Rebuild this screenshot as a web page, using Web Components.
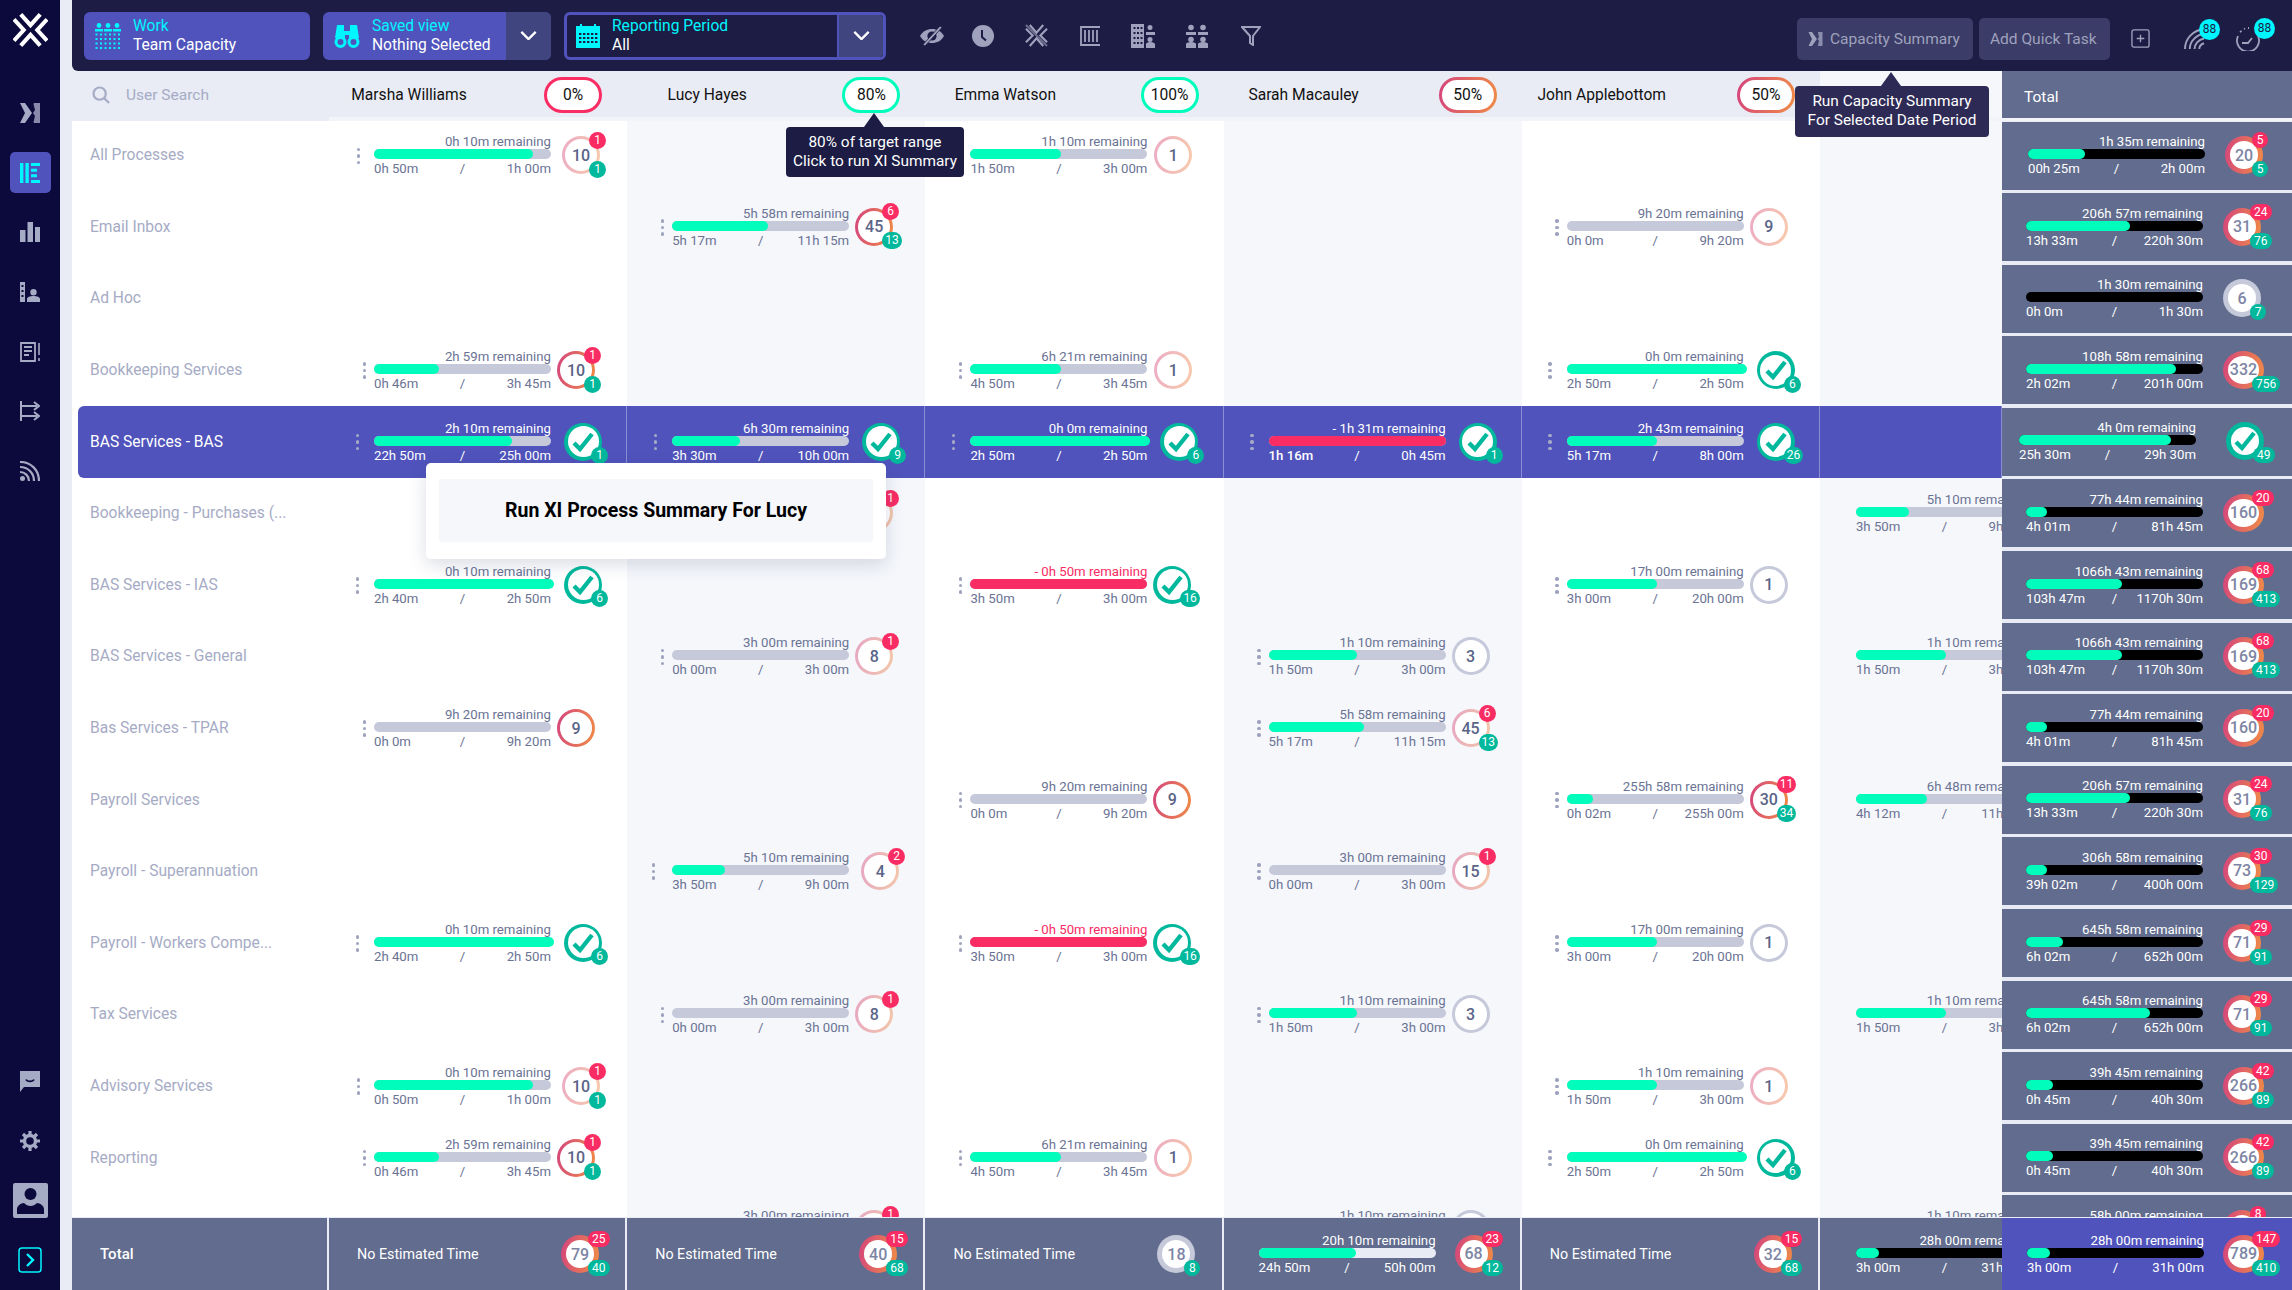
<!DOCTYPE html>
<html>
<head>
<meta charset="utf-8">
<title>Team Capacity</title>
<style>
    html, body { margin: 0; height: 100%; overflow: hidden; background: #e9ecf5; font-family: 'Roboto', 'Liberation Sans', sans-serif; }
</style>
</head>
<body>
<x-app></x-app>
<script>
// icons, all drawn on their own viewBox, coloured through currentColor
const ICONS = {
    logo: `<svg viewBox="0 0 36 34" fill="none" stroke="currentColor" stroke-width="4.200"><path d="M8 1l10 11L28 1M8 33l10-11 10 11M1 6l10 11L1 28M35 6L25 17l10 11"/></svg>`,
    xi: `<svg viewBox="0 0 20 20" fill="currentColor"><path d="M0 0h5l7 10-7 10H0l5-10z"/><path d="M14 0h6v20h-6l-.5-1 1.500-6-2-3 2-3-1.500-6z" opacity=".8"/></svg>`,
    weave: `<svg viewBox="0 0 24 24" fill="none" stroke="currentColor" stroke-width="2.200"><path d="M5 1l7 8 7-8M5 23l7-8 7 8M1 5l7 7-7 7M23 5l-7 7 7 7"/><path d="M1 1l22 22" opacity=".6"/></svg>`,
    lines: `<svg viewBox="0 0 20 20" fill="currentColor"><path d="M0 0h3.400v20H0zM5.400 0h3.400v20H5.400zM11 0h9v3h-9zM11 5.700h6v3h-6zM11 11.300h6v3h-6zM11 17h9v3h-9z"/></svg>`,
    bars: `<svg viewBox="0 0 20 20" fill="currentColor"><path d="M0 8h5.500v12H0zM7.500 0H13v20H7.500zM15 5h5v15h-5z"/></svg>`,
    person: `<svg viewBox="0 0 20 20" fill="currentColor"><path d="M0 0h5v20H0zM13.500 7a3.200 3.200 0 1 1 0 6.400 3.200 3.200 0 0 1 0-6.400zM7 20v-3c0-2 3-3 6.500-3S20 15 20 17v3z"/><path d="M1.500 3h2v2h-2zM1.500 8h2v2h-2zM1.500 13h2v2h-2z" fill="#0c093c"/></svg>`,
    doc: `<svg viewBox="0 0 20 20" fill="none" stroke="currentColor" stroke-width="1.800"><path d="M1 1h14v18H1zM4 5h8M4 9h8M4 13h5"/><path d="M19 1v12M19 16v3" stroke-width="1.600"/></svg>`,
    arrows: `<svg viewBox="0 0 20 20" fill="none" stroke="currentColor" stroke-width="2"><path d="M1 0v20M1 5h16M1 15h16M14 1l5 4-5 4M14 11l5 4-5 4"/></svg>`,
    rss: `<svg viewBox="0 0 20 20" fill="none" stroke="currentColor" stroke-width="2.200"><path d="M0 1c11 0 19 8 19 19M0 6c8 0 14 6 14 14M0 11c5 0 9 4 9 9"/><circle cx="2.500" cy="17.500" r="2.500" fill="currentColor" stroke="none"/></svg>`,
    wifi: `<svg viewBox="0 0 22 22" fill="none" stroke="currentColor" stroke-width="2"><path d="M1 22C1 11 10 2 21 1M6 22C6 14 13 7 21 6M11 22c0-5 4-10 10-11M16 22c0-3 2-5 5-6"/></svg>`,
    msg: `<svg viewBox="0 0 20 21" fill="currentColor"><path d="M0 0h20v16H4l-4 5z"/><path d="M6 8.500c1 2.500 7 2.500 8 0" fill="none" stroke="#0c093c" stroke-width="1.600"/></svg>`,
    gear: `<svg viewBox="0 0 20 20" fill="none" stroke="currentColor"><circle cx="10" cy="10" r="5.500" stroke-width="3.400"/><path d="M10 0v4M10 16v4M0 10h4M16 10h4M3 3l3 3M14 14l3 3M17 3l-3 3M6 14l-3 3" stroke-width="3.200"/></svg>`,
    avatar: `<svg viewBox="0 0 35 35"><rect fill="currentColor" width="35" height="35" rx="2"/><circle cx="17.500" cy="11" r="6" fill="#0c093c"/><path fill="#0c093c" d="M4 31v-5c0-3 4-6 7-6 2 2 4 3 6.500 3s4.500-1 6.500-3c3 0 7 3 7 6v5z"/></svg>`,
    people: `<svg viewBox="0 0 26 26" fill="currentColor"><circle cx="4" cy="2.500" r="2.400"/><circle cx="13" cy="2.500" r="2.400"/><circle cx="22" cy="2.500" r="2.400"/><path d="M0 6h8v2.400H0zM9 6h8v2.400H9zM18 6h8v2.400h-8z"/><path d="M.5 10.500h2v2h-2zM5 10.500h2v2H5zM9.500 10.500h2v2h-2zM14 10.500h2v2h-2zM18.500 10.500h2v2h-2zM23 10.500h2v2h-2zM.5 15h2v2h-2zM5 15h2v2H5zM9.500 15h2v2h-2zM14 15h2v2h-2zM18.500 15h2v2h-2zM23 15h2v2h-2zM.5 19.500h2v2h-2zM5 19.500h2v2H5zM9.500 19.500h2v2h-2zM14 19.500h2v2h-2zM18.500 19.500h2v2h-2zM23 19.500h2v2h-2zM.5 24h2v2h-2zM5 24h2v2H5zM9.500 24h2v2h-2zM14 24h2v2h-2zM18.500 24h2v2h-2zM23 24h2v2h-2z"/></svg>`,
    binoculars: `<svg viewBox="0 0 26 26" fill="currentColor"><path d="M3 2h7v6h6V2h7l2 13H15v-3h-4v3H1z"/><circle cx="6.500" cy="19" r="4.500" fill="none" stroke="currentColor" stroke-width="3"/><circle cx="19.500" cy="19" r="4.500" fill="none" stroke="currentColor" stroke-width="3"/></svg>`,
    calendar: `<svg viewBox="0 0 24 24"><path fill="currentColor" d="M0 2h4V0h2v2h12V0h2v2h4v22H0z"/><path fill="#1c1c44" d="M3 9h2.400v2H3zM7 9h2.400v2H7zM11 9h2.400v2H11zM15 9h2.400v2H15zM19 9h2.400v2H19zM3 13h2.400v2H3zM7 13h2.400v2H7zM11 13h2.400v2H11zM15 13h2.400v2H15zM19 13h2.400v2H19zM3 17h2.400v2H3zM7 17h2.400v2H7zM11 17h2.400v2H11zM15 17h2.400v2H15zM19 17h2.400v2H19z"/></svg>`,
    chevron: `<svg viewBox="0 0 18 10" fill="none" stroke="currentColor" stroke-width="2.600"><path d="M1 1l8 8 8-8"/></svg>`,
    search: `<svg viewBox="0 0 20 20" fill="none" stroke="currentColor" stroke-width="2.400"><circle cx="8.500" cy="8.500" r="6.800"/><path d="M13.500 13.500L19 19"/></svg>`,
    eyeoff: `<svg viewBox="0 0 24 20" fill="currentColor"><path d="M0 10c3-5 7-7 12-7s9 2 12 7c-3 5-7 7-12 7S3 15 0 10z"/><circle cx="12" cy="10" r="4.600" fill="#1c1c44"/><path d="M20 0l2 1.500L5 20l-2-1.500z" stroke="#1c1c44" stroke-width=".8"/></svg>`,
    clock: `<svg viewBox="0 0 22 22"><circle cx="11" cy="11" r="11" fill="currentColor"/><path d="M10 5v7l4 3.500" fill="none" stroke="#1c1c44" stroke-width="2"/></svg>`,
    columns: `<svg viewBox="0 0 20 20" fill="none" stroke="currentColor" stroke-width="1.800"><path d="M20 19H1V1h19M5 4v12M9 4v12M13 4v12M17 4v12"/></svg>`,
    building: `<svg viewBox="0 0 24 24"><path fill="currentColor" d="M0 0h13v24H0z"/><path fill="#1c1c44" d="M2.500 3h2v2h-2zM6 3h2v2H6zM9.500 3h2v2h-2zM2.500 8h2v2h-2zM6 8h2v2H6zM9.500 8h2v2h-2zM2.500 13h2v2h-2zM6 13h2v2H6zM9.500 13h2v2h-2zM2.500 18h2v2h-2zM6 18h2v2H6zM9.500 18h2v2h-2z"/><g fill="currentColor"><circle cx="19" cy="3.500" r="2.500"/><path d="M15 8h9v3h-9z"/><circle cx="19" cy="15.500" r="2.500"/><path d="M15 20c0-1 2-2 4-2s5 1 5 2v4h-9z"/></g></svg>`,
    team: `<svg viewBox="0 0 24 24" fill="currentColor"><circle cx="6" cy="3.500" r="2.800"/><circle cx="18" cy="3.500" r="2.800"/><path d="M1 8h10v3H1zM13 8h10v3H13z"/><circle cx="6" cy="15.500" r="2.800"/><circle cx="18" cy="15.500" r="2.800"/><path d="M1 20c0-1 2-2 5-2s5 1 5 2v4H1zM13 20c0-1 2-2 5-2s5 1 5 2v4H13z"/></svg>`,
    funnel: `<svg viewBox="0 0 20 20" fill="none" stroke="currentColor" stroke-width="2"><path d="M1 1h18l-7 9v9l-3-2v-7z"/></svg>`,
    plus: `<svg viewBox="0 0 20 20" fill="none" stroke="currentColor" stroke-width="1.400"><rect x="1" y="1" width="18" height="18" rx="2"/><path d="M10 6v8M6 10h8"/></svg>`,
    dial: `<svg viewBox="0 0 24 24" fill="none" stroke="currentColor" stroke-width="1.800"><path d="M22 9a11 11 0 1 1-20 0" /><path d="M4 5l1.500-1M8 2l1-.5M12 1h1" /><path d="M6 16h6l4-5"/></svg>`,
    next: `<svg viewBox="0 0 24 26" fill="none" stroke="currentColor"><rect x="1" y="1" width="22" height="24" rx="3" stroke-width="1.500"/><path d="M9 7l6 6-6 6" stroke-width="2.400"/></svg>`
};

class XIcon extends HTMLElement {
    connectedCallback() {
        const w = this.getAttribute("w") || 20;
        const h = this.getAttribute("h") || w;
        this.attachShadow({ mode: "open" }).innerHTML = `
            <style>
                :host { display: block; width: ${w}px; height: ${h}px; flex: none; color: ${this.getAttribute("color") || "inherit"}; }
                svg { display: block; width: 100%; height: 100%; }
            </style>
            ${ICONS[this.getAttribute("name")]}`;
    }
}
customElements.define("x-icon", XIcon);

class XSideItem extends HTMLElement {
    connectedCallback() {
        this.attachShadow({ mode: "open" }).innerHTML = `
            <style>
                :host { display: flex; height: 59.700px; align-items: center; justify-content: center; color: #a6abc5; }
                #box { width: 41px; height: 41px; border-radius: 5px; display: flex; align-items: center; justify-content: center; }
                :host([active]) { color: #00f6ff; }
                :host([active]) #box { background: #4f53bb; }
            </style>
            <div id="box"><slot></slot></div>`;
    }
}
customElements.define("x-side-item", XSideItem);

class XSidebar extends HTMLElement {
    connectedCallback() {
        this.attachShadow({ mode: "open" }).innerHTML = `
            <style>
                :host { display: flex; flex-direction: column; width: 60px; height: 1290px; background: #0c093c; }
                #logo { padding: 13px 0 36px 13px; color: #fff; }
                #spacer { flex: 1; }
            </style>
            <div id="logo"><x-icon name="logo" w="35" h="34"></x-icon></div>
            <x-side-item><x-icon name="xi" w="20"></x-icon></x-side-item>
            <x-side-item active><x-icon name="lines" w="20"></x-icon></x-side-item>
            <x-side-item><x-icon name="bars" w="20"></x-icon></x-side-item>
            <x-side-item><x-icon name="person" w="20"></x-icon></x-side-item>
            <x-side-item><x-icon name="doc" w="20"></x-icon></x-side-item>
            <x-side-item><x-icon name="arrows" w="20"></x-icon></x-side-item>
            <x-side-item><x-icon name="rss" w="20"></x-icon></x-side-item>
            <div id="spacer"></div>
            <x-side-item><x-icon name="msg" w="20" h="21"></x-icon></x-side-item>
            <x-side-item><x-icon name="gear" w="20"></x-icon></x-side-item>
            <x-side-item><x-icon name="avatar" w="35"></x-icon></x-side-item>
            <x-side-item><x-icon name="next" w="24" h="26" color="#00f6ff"></x-icon></x-side-item>`;
    }
}
customElements.define("x-sidebar", XSidebar);

// the three selector buttons at the left of the top bar
class XPicker extends HTMLElement {
    connectedCallback() {
        const drop = this.hasAttribute("drop");
        this.attachShadow({ mode: "open" }).innerHTML = `
            <style>
                :host { display: flex; height: 48px; box-sizing: border-box; border-radius: 6px; background: #4f53bb; overflow: hidden; flex: none; }
                :host([outline]) { border: 3px solid #4f53bb; background: #1c1c44; }
                #main { flex: 1; display: flex; align-items: center; gap: 12px; padding-left: 11px; }
                :host([outline]) #main { padding-left: 9px; }
                #text { display: flex; flex-direction: column; font-size: 15.600px; line-height: 19px; color: #fff; white-space: nowrap; }
                #label { color: #00f6ff; }
                #drop { display: ${drop ? "flex" : "none"}; width: 45px; align-items: center; justify-content: center; background: #40447f; color: #fff; }
                :host([outline]) #drop { border-left: 2px solid #4f53bb; width: 44px; }
            </style>
            <div id="main">
                <slot></slot>
                <div id="text">
                    <span id="label">${this.getAttribute("label")}</span>
                    <span>${this.getAttribute("value")}</span>
                </div>
            </div>
            <div id="drop"><x-icon name="chevron" w="17" h="9"></x-icon></div>`;
    }
}
customElements.define("x-picker", XPicker);

class XToolButton extends HTMLElement {
    constructor() {
        super();
        this.attachShadow({ mode: "open" }).innerHTML = `
            <style>
                :host { display: flex; align-items: center; gap: 7px; height: 42px; box-sizing: border-box; padding: 0 11px; border-radius: 5px; background: #3c3c68; color: #9ea2bd; font-size: 15.500px; white-space: nowrap; }
            </style>
            <slot></slot>`;
    }
}
customElements.define("x-tool-button", XToolButton);

class XNotify extends HTMLElement {
    connectedCallback() {
        this.attachShadow({ mode: "open" }).innerHTML = `
            <style>
                :host { display: block; position: relative; color: #9ea2bd; }
                #badge { position: absolute; right: -15px; top: -9px; width: 21px; height: 21px; border-radius: 50%; background: #00f6ff; color: #1c1c44; font-size: 12px; line-height: 21px; text-align: center; }
            </style>
            <slot></slot>
            <div id="badge">88</div>`;
    }
}
customElements.define("x-notify", XNotify);

class XTopbar extends HTMLElement {
    connectedCallback() {
        this.attachShadow({ mode: "open" }).innerHTML = `
            <style>
                :host { display: flex; align-items: center; height: 71px; box-sizing: border-box; padding: 0 32px 0 12px; background: #1c1c44; border-bottom-left-radius: 6px; flex: none; }
                #pickers { display: flex; gap: 13px; }
                #tools { display: flex; align-items: center; margin-left: 34px; color: #9ea2bd; }
                #right { margin-left: auto; display: flex; align-items: center; }
                #right > * { flex: none; }
            </style>
            <div id="pickers">
                <x-picker style="width:226px" label="Work" value="Team Capacity"><x-icon name="people" w="26" color="#00f6ff"></x-icon></x-picker>
                <x-picker style="width:228px" label="Saved view" value="Nothing Selected" drop><x-icon name="binoculars" w="26" color="#00f6ff"></x-icon></x-picker>
                <x-picker style="width:322px" label="Reporting Period" value="All" drop outline><x-icon name="calendar" w="24" color="#00f6ff"></x-icon></x-picker>
            </div>
            <div id="tools">
                <x-icon name="eyeoff" w="24" h="20"></x-icon>
                <x-icon name="clock" w="22" style="margin-left:28px"></x-icon>
                <x-icon name="weave" w="23" style="margin-left:31px"></x-icon>
                <x-icon name="columns" w="20" style="margin-left:32px"></x-icon>
                <x-icon name="building" w="24" style="margin-left:31px"></x-icon>
                <x-icon name="team" w="24" style="margin-left:30px"></x-icon>
                <x-icon name="funnel" w="20" style="margin-left:32px"></x-icon>
            </div>
            <div id="right">
                <x-tool-button style="width:176px; margin-top:6px"><x-icon name="xi" w="15" h="14"></x-icon>Capacity Summary</x-tool-button>
                <x-tool-button style="margin-left:6px; width:131px; margin-top:6px">Add Quick Task</x-tool-button>
                <x-icon name="plus" w="19" color="#9ea2bd" style="margin-left:21px; margin-top:6px"></x-icon>
                <x-notify style="margin-left:34px; margin-top:6px"><x-icon name="wifi" w="21"></x-icon></x-notify>
                <x-notify style="margin-left:31px; margin-top:6px"><x-icon name="dial" w="24"></x-icon></x-notify>
            </div>`;
    }
}
customElements.define("x-topbar", XTopbar);

// shared column template for header, rows and footer
const GRID_STYLE = "display: grid; grid-template-columns: 257px repeat(5, 298.2px) 1fr 290px;";

class XPill extends HTMLElement {
    connectedCallback() {
        const tone = this.getAttribute("tone");
        const edge = { red: "#f92c64", green: "#00fdbb", mix: "linear-gradient(100deg,#d4447d,#f08d45)" }[tone];
        this.attachShadow({ mode: "open" }).innerHTML = `
            <style>
                :host { display: block; width: 58px; height: 36px; box-sizing: border-box; padding: 3px; border-radius: 18px; background: ${edge}; flex: none; }
                div { height: 100%; border-radius: 15px; background: #fff; color: #111; font-size: 15.600px; display: flex; align-items: center; justify-content: center; }
            </style>
            <div><slot></slot></div>`;
    }
}
customElements.define("x-pill", XPill);

class XHeadCell extends HTMLElement {
    connectedCallback() {
        this.attachShadow({ mode: "open" }).innerHTML = `
            <style>
                :host { display: flex; align-items: center; justify-content: space-between; height: 46px; box-sizing: border-box; padding: 2px 25px 0 0; background: #e9ecf5; color: #111; font-size: 15.600px; }
                #name { width: 160px; text-align: center; white-space: nowrap; }
            </style>
            <div id="name">${this.getAttribute("name")}</div>
            <x-pill tone="${this.getAttribute("tone")}">${this.getAttribute("pct")}</x-pill>`;
    }
}
customElements.define("x-head-cell", XHeadCell);

class XHead extends HTMLElement {
    connectedCallback() {
        this.attachShadow({ mode: "open" }).innerHTML = `
            <style>
                :host { ${GRID_STYLE} height: 50px; position: relative; z-index: 1; flex: none; background: #f2f4fa; }
                #search { display: flex; align-items: center; gap: 16px; padding: 0 0 2px 20px; background: #e9ecf5; color: #a6abc5; font-size: 15.500px; }
                #empty { background: #f5f7fb; height: 46px; }
                #total { height: 47px; box-sizing: border-box; padding: 5px 0 0 22px; background: #616c8e; color: #fff; font-size: 15.500px; display: flex; align-items: center; }
            </style>
            <div id="search"><x-icon name="search" w="18"></x-icon>User Search</div>
            <x-head-cell name="Marsha Williams" pct="0%" tone="red"></x-head-cell>
            <x-head-cell name="Lucy Hayes" pct="80%" tone="green"></x-head-cell>
            <x-head-cell name="Emma Watson" pct="100%" tone="green"></x-head-cell>
            <x-head-cell name="Sarah Macauley" pct="50%" tone="mix"></x-head-cell>
            <x-head-cell name="John Applebottom" pct="50%" tone="mix"></x-head-cell>
            <div id="empty"></div>
            <div id="total">Total</div>`;
    }
}
customElements.define("x-head", XHead);

// ring with a count or a tick, and the two little badges on its edge
class XRing extends HTMLElement {
    connectedCallback() {
        const value = this.getAttribute("value");
        const tone = this.getAttribute("tone") || "bright";
        const heavy = this.hasAttribute("heavy");
        const check = value === "check";
        const edge = {
            bright: "linear-gradient(100deg,#d4447d,#f08d45)",
            pale: "linear-gradient(100deg,rgba(212,68,125,.45),rgba(240,141,69,.45))",
            gray: "#c5c9da",
            check: "#00b89c"
        }[check ? "check" : tone];
        const red = this.getAttribute("red");
        const teal = this.getAttribute("teal");
        const wide = value.length > 2 && !check;
        this.attachShadow({ mode: "open" }).innerHTML = `
            <style>
                :host { display: block; position: relative; flex: none; width: ${wide ? 41 : 38}px; height: 38px; font-family: 'Roboto', sans-serif; }
                #edge { box-sizing: border-box; width: 100%; height: 100%; padding: ${heavy ? 5 : (check ? 3.5 : 3)}px; border-radius: 50%; background: ${edge}; }
                #in { width: 100%; height: 100%; border-radius: 50%; background: #fff; display: flex; align-items: center; justify-content: center;
                      font-size: 16px; font-weight: 500; color: ${heavy ? "#7d85a5" : "#5a6488"}; }
                .badge { position: absolute; left: ${wide ? 29 : 27}px; height: ${heavy ? 16 : 17}px; min-width: ${heavy ? 16 : 17}px; box-sizing: border-box; padding: 0 ${heavy ? 4 : 3}px; border-radius: 9px; font-size: 12px; line-height: ${heavy ? 16 : 17}px; text-align: center; color: #fff; }
                #red { top: ${heavy ? -4 : -4.5}px; background: #f92c64; }
                #teal { top: ${heavy ? 25 : 24.5}px; background: #00b89c; }
                svg { width: 24px; height: 22px; display: block; }
            </style>
            <div id="edge"><div id="in">${check ? `<svg viewBox="0 0 24 22" fill="none" stroke="#00b89c" stroke-width="4.400"><path d="M3 12l6 6L21 3"/></svg>` : value}</div></div>
            ${red ? `<div class="badge" id="red">${red}</div>` : ""}
            ${teal ? `<div class="badge" id="teal">${teal}</div>` : ""}`;
    }
}
customElements.define("x-ring", XRing);

// bar with "remaining" above and done / estimate below
class XBar extends HTMLElement {
    connectedCallback() {
        const fill = +this.getAttribute("fill");
        const over = this.hasAttribute("over");
        const rem = this.getAttribute("rem");
        this.attachShadow({ mode: "open" }).innerHTML = `
            <style>
                :host { display: block; width: 177px; flex: none; font-size: 13.200px; line-height: 14px; color: var(--bar-text, #6a7394); white-space: nowrap; font-family: 'Roboto', sans-serif; }
                #rem { text-align: right; }
                :host([over]) #rem { color: var(--bar-over, #f92c64); }
                #track { position: relative; height: 10px; border-radius: 5px; background: var(--bar-track, #c5c9da); margin-bottom: 3px; }
                #fill { height: 100%; border-radius: 5px; background: ${over ? "#f92c64" : "#00fdbb"}; width: ${fill > 100 ? "calc(100% + 3px)" : fill + "%"}; }
                #nums { display: grid; grid-template-columns: 1fr auto 1fr; }
                #nums span:last-child { text-align: right; }
                :host([strong]) #nums span:first-child { font-weight: 500; }
            </style>
            <div id="rem">${rem} remaining</div>
            <div id="track"><div id="fill"></div></div>
            <div id="nums"><span>${this.getAttribute("done")}</span><span>/</span><span>${this.getAttribute("est")}</span></div>`;
    }
}
customElements.define("x-bar", XBar);

class XDots extends HTMLElement {
    constructor() {
        super();
        this.attachShadow({ mode: "open" }).innerHTML = `
            <style>
                :host { display: flex; flex-direction: column; gap: 3px; flex: none; }
                i { width: 3.500px; height: 3.500px; border-radius: 50%; background: var(--dots, #9ea2bd); }
            </style>
            <i></i><i></i><i></i>`;
    }
}
customElements.define("x-dots", XDots);

// one process / person cell. spec: {rem, done, est, fill, ring, tone, red, teal, pad, gap, dot, over, strong}
class XCell extends HTMLElement {
    set spec(s) { this._spec = s; }
    connectedCallback() {
        const s = this._spec || {};
        const check = s.ring === "check";
        const kind = this.getAttribute("kind") || "";
        const heavy = kind !== "";
        const gap = s.gap != null ? s.gap : (check ? 13 : (heavy ? 20 : 6));
        const dot = s.dot != null ? s.dot : (check ? 15 : 8);
        const pad = s.pad != null ? s.pad : 45;
        const attrs = (s.red ? ` red="${s.red}"` : "") + (s.teal ? ` teal="${s.teal}"` : "") + (s.tone ? ` tone="${s.tone}"` : "") + (heavy ? " heavy" : "");
        const ring = s.ring ? `<x-ring value="${s.ring}"${attrs}></x-ring>` : "";
        let body = "";
        if (s.noest) {
            body = `<div id="noest">No Estimated Time</div>${ring}`;
        } else if (s.rem) {
            // the clipped sixth column carries no drag dots
            const lead = heavy ? "" : `<div id="dots" style="width:${pad}px;padding-right:${dot}px">${s.pad ? "" : "<x-dots></x-dots>"}</div>`;
            body = `${lead}
                <x-bar rem="${s.rem}" done="${s.done}" est="${s.est}" fill="${s.fill}"${s.over ? " over" : ""}${s.strong ? " strong" : ""}></x-bar>
                <div id="ring" style="margin-left:${gap}px">${ring}</div>`;
        }
        this.attachShadow({ mode: "open" }).innerHTML = `
            <style>
                :host { display: flex; align-items: center; min-width: 0; overflow: hidden; box-sizing: border-box; background: var(--cell-bg, #fff); }
                :host([alt]) { background: #f5f7fb; }
                :host([kind="total"]) { margin: 1.500px 0 2px; height: 68px; padding-left: ${s.pad != null ? s.pad : 24}px; background: #616c8e; --bar-text: #fff; --bar-track: #000; --bar-over: #fff; overflow: visible; }
                :host([kind="foot"]) { padding-left: ${s.pad != null ? s.pad : 0}px; background: #616c8e; --bar-text: #fff; --bar-track: #000; border-left: 2px solid #e9ecf5; margin-left: -2px; }
                :host([kind="grand"]) { padding-left: 25px; background: #4f53bb; --bar-text: #fff; --bar-track: #000; overflow: visible; }
                :host([sel]) { background: #4f53bb; --bar-text: #fff; --bar-over: #fff; --dots: #a6abc5; border-right: 1px solid #8a8ed0; }
                #dots { display: flex; justify-content: flex-end; box-sizing: border-box; flex: none; }
                #ring { padding-bottom: 1px; flex: none; }
                #noest { width: 204px; padding-left: 28px; color: #fff; font-size: 14.300px; white-space: nowrap; flex: none; }
            </style>
            ${body}`;
    }
}
customElements.define("x-cell", XCell);

class XRow extends HTMLElement {
    connectedCallback() {
        const label = this.getAttribute("label");
        this.attachShadow({ mode: "open" }).innerHTML = `
            <style>
                :host { ${GRID_STYLE} height: 71.600px; flex: none; }
                #label { background: #fff; min-width: 0; }
                #inner { height: 100%; margin-left: 5.500px; padding: 0 0 1px 12.500px; box-sizing: border-box; display: flex; align-items: center; color: #a6abc5; font-size: 15.600px; white-space: nowrap; }
                :host([sel]) #inner { background: #4f53bb; color: #fff; border-radius: 6px 0 0 6px; }
            </style>
            <div id="label"><div id="inner">${label}</div></div>
            <slot></slot>`;
    }
}
customElements.define("x-row", XRow);

class XFoot extends HTMLElement {
    constructor() {
        super();
        this.attachShadow({ mode: "open" }).innerHTML = `
            <style>
                :host { ${GRID_STYLE} height: 73px; flex: none; position: relative; z-index: 1; background: #616c8e; border-top: 1px solid #e9ecf5; box-sizing: border-box; }
                #total { color: #fff; font-size: 15px; font-weight: 500; display: flex; align-items: center; padding-left: 28px; background: #616c8e; }
            </style>
            <div id="total">Total</div>
            <slot></slot>`;
    }
}
customElements.define("x-foot", XFoot);

// dark tooltip with an arrow on top
class XTip extends HTMLElement {
    connectedCallback() {
        const bg = this.getAttribute("bg");
        this.attachShadow({ mode: "open" }).innerHTML = `
            <style>
                :host { display: block; position: absolute; z-index: 5; box-sizing: border-box; background: ${bg}; border-radius: 4px; color: #fff; font-size: 15.400px; line-height: 19px; text-align: center; white-space: nowrap; padding-top: 6px; }
                #arrow { position: absolute; left: ${this.getAttribute("arrow")}px; top: -14px; margin-left: -10px; border: 10px solid transparent; border-top: 0; border-bottom: 14px solid ${bg}; }
            </style>
            <div id="arrow"></div>
            <slot></slot>`;
    }
}
customElements.define("x-tip", XTip);

class XPopup extends HTMLElement {
    constructor() {
        super();
        this.attachShadow({ mode: "open" }).innerHTML = `
            <style>
                :host { display: block; position: absolute; z-index: 5; left: 426px; top: 463px; width: 460px; height: 96px; box-sizing: border-box; padding: 16px 13px 17px; background: #fff; border-radius: 5px; box-shadow: 0 6px 18px rgba(60, 70, 110, .18); }
                div { height: 100%; border-radius: 3px; background: #f5f7fb; display: flex; align-items: center; justify-content: center; color: #000; font-size: 19.500px; font-weight: 700; box-sizing: border-box; }
            </style>
            <div><slot></slot></div>`;
    }
}
customElements.define("x-popup", XPopup);

// table data: col -> [rem, done, est, fill, ring, tone, red, teal, extras]
const fade10 = (rem, done, est, fill) => [rem, done, est, fill, "10", "pale", 1, 1, { gap: 11, dot: 14 }];
const tick = (rem, done, est, fill, teal, extra) => [rem, done, est, fill, "check", "", "", teal, extra];
const ROWS = [
    { label: "All Processes", cells: { 0: fade10("0h 10m", "0h 50m", "1h 00m", 90), 2: ["1h 10m", "1h 50m", "3h 00m", 51, "1", "pale", "", "", { gap: 7 }] },
      total: ["1h 35m", "00h 25m", "2h 00m", 32, "20", "bright", 5, 5, { pad: 26 }] },
    { label: "Email Inbox", cells: { 1: ["5h 58m", "5h 17m", "11h 15m", 54, "45", "bright", 6, 13], 4: ["9h 20m", "0h 0m", "9h 20m", 0, "9", "pale", "", ""] },
      total: ["206h 57m", "13h 33m", "220h 30m", 59, "31", "bright", 24, 76] },
    { label: "Ad Hoc", cells: {},
      total: ["1h 30m", "0h 0m", "1h 30m", 0, "6", "gray", "", 7] },
    { label: "Bookkeeping Services", cells: { 0: ["2h 59m", "0h 46m", "3h 45m", 37, "10", "bright", 1, 1], 2: ["6h 21m", "4h 50m", "3h 45m", 51, "1", "pale", "", "", { gap: 7 }], 4: tick("0h 0m", "2h 50m", "2h 50m", 101, 6) },
      total: ["108h 58m", "2h 02m", "201h 00m", 85, "332", "bright", "", 756] },
    { label: "BAS Services - BAS", sel: true, cells: { 0: tick("2h 10m", "22h 50m", "25h 00m", 78, 1), 1: tick("6h 30m", "3h 30m", "10h 00m", 38.500, 9), 2: tick("0h 0m", "2h 50m", "2h 50m", 101, 6), 3: ["- 1h 31m", "1h 16m", "0h 45m", 100, "check", "", "", 1, { over: 1, strong: 1 }], 4: tick("2h 43m", "5h 17m", "8h 00m", 51, 26) },
      total: ["4h 0m", "25h 30m", "29h 30m", 86, "check", "", "", 49, { pad: 17, gap: 30 }] },
    { label: "Bookkeeping - Purchases (...", cells: { 1: ["6h 30m", "3h 30m", "10h 00m", 38, "1", "pale", 1, ""], 5: ["5h 10m", "3h 50m", "9h 00m", 30, "", "", "", "", { pad: 36 }] },
      total: ["77h 44m", "4h 01m", "81h 45m", 12, "160", "bright", 20, ""] },
    { label: "BAS Services - IAS", cells: { 0: tick("0h 10m", "2h 40m", "2h 50m", 101, 6), 2: ["- 0h 50m", "3h 50m", "3h 00m", 100, "check", "", "", 16, { over: 1, gap: 6, dot: 8 }], 4: ["17h 00m", "3h 00m", "20h 00m", 51, "1", "gray", "", ""] },
      total: ["1066h 43m", "103h 47m", "1170h 30m", 54, "169", "bright", 68, 413] },
    { label: "BAS Services - General", cells: { 1: ["3h 00m", "0h 00m", "3h 00m", 0, "8", "pale", 1, ""], 3: ["1h 10m", "1h 50m", "3h 00m", 50, "3", "gray", "", ""], 5: ["1h 10m", "1h 50m", "3h 00m", 51, "", "", "", "", { pad: 36 }] },
      total: ["1066h 43m", "103h 47m", "1170h 30m", 54, "169", "bright", 68, 413] },
    { label: "Bas Services - TPAR", cells: { 0: ["9h 20m", "0h 0m", "9h 20m", 0, "9", "bright", "", ""], 3: ["5h 58m", "5h 17m", "11h 15m", 54, "45", "pale", 6, 13] },
      total: ["77h 44m", "4h 01m", "81h 45m", 12, "160", "bright", 20, ""] },
    { label: "Payroll Services", cells: { 2: ["9h 20m", "0h 0m", "9h 20m", 0, "9", "bright", "", ""], 4: ["255h 58m", "0h 02m", "255h 00m", 15, "30", "bright", 11, 34], 5: ["6h 48m", "4h 12m", "11h 00m", 40, "", "", "", "", { pad: 36 }] },
      total: ["206h 57m", "13h 33m", "220h 30m", 59, "31", "bright", 24, 76] },
    { label: "Payroll - Superannuation", cells: { 1: ["5h 10m", "3h 50m", "9h 00m", 30, "4", "pale", 2, "", { gap: 12, dot: 17 }], 3: ["3h 00m", "0h 00m", "3h 00m", 0, "15", "pale", 1, ""] },
      total: ["306h 58m", "39h 02m", "400h 00m", 12, "73", "bright", 30, 129] },
    { label: "Payroll - Workers Compe...", cells: { 0: tick("0h 10m", "2h 40m", "2h 50m", 101, 6), 2: ["- 0h 50m", "3h 50m", "3h 00m", 100, "check", "", "", 16, { over: 1, gap: 6, dot: 8 }], 4: ["17h 00m", "3h 00m", "20h 00m", 51, "1", "gray", "", ""] },
      total: ["645h 58m", "6h 02m", "652h 00m", 21, "71", "bright", 29, 91] },
    { label: "Tax Services", cells: { 1: ["3h 00m", "0h 00m", "3h 00m", 0, "8", "pale", 1, ""], 3: ["1h 10m", "1h 50m", "3h 00m", 50, "3", "gray", "", ""], 5: ["1h 10m", "1h 50m", "3h 00m", 51, "", "", "", "", { pad: 36 }] },
      total: ["645h 58m", "6h 02m", "652h 00m", 70, "71", "bright", 29, 91] },
    { label: "Advisory Services", cells: { 0: fade10("0h 10m", "0h 50m", "1h 00m", 90), 4: ["1h 10m", "1h 50m", "3h 00m", 51, "1", "pale", "", ""] },
      total: ["39h 45m", "0h 45m", "40h 30m", 15, "266", "bright", 42, 89] },
    { label: "Reporting", cells: { 0: ["2h 59m", "0h 46m", "3h 45m", 37, "10", "bright", 1, 1], 2: ["6h 21m", "4h 50m", "3h 45m", 51, "1", "pale", "", "", { gap: 7 }], 4: tick("0h 0m", "2h 50m", "2h 50m", 101, 6) },
      total: ["39h 45m", "0h 45m", "40h 30m", 15, "266", "bright", 42, 89] },
    { label: "", cells: { 1: ["3h 00m", "0h 00m", "3h 00m", 0, "8", "pale", 1, ""], 3: ["1h 10m", "1h 50m", "3h 00m", 50, "3", "gray", "", ""], 5: ["1h 10m", "1h 50m", "3h 00m", 51, "", "", "", "", { pad: 36 }] },
      total: ["58h 00m", "3h 00m", "61h 00m", 12, "90", "bright", 8, ""] }
];

const toSpec = (a) => a ? Object.assign({ rem: a[0], done: a[1], est: a[2], fill: a[3], ring: a[4], tone: a[5], red: a[6], teal: a[7] }, a[8] || {}) : {};

function makeCell(col, data, kind, sel) {
    const c = document.createElement("x-cell");
    c.spec = toSpec(data);
    if (col % 2 === 1) c.setAttribute("alt", "");
    if (kind) c.setAttribute("kind", kind);
    if (sel) c.setAttribute("sel", "");
    return c;
}

class XApp extends HTMLElement {
    connectedCallback() {
        this.attachShadow({ mode: "open" }).innerHTML = `
            <style>
                :host { display: grid; grid-template-columns: 60px 1fr; width: 2292px; height: 1290px; position: relative; overflow: hidden; }
                #main { margin-left: 12px; display: flex; flex-direction: column; height: 1290px; min-width: 0; }
                #rows { flex: 1; min-height: 0; overflow: hidden; margin-top: -1px; display: flex; flex-direction: column; }
            </style>
            <x-sidebar></x-sidebar>
            <div id="main">
                <x-topbar></x-topbar>
                <x-head></x-head>
                <div id="rows"></div>
                <x-foot id="foot"></x-foot>
            </div>
            <x-tip bg="#1c1c44" arrow="88" style="left:786px; top:127px; width:178px; height:50px">80% of target range<br>Click to run XI Summary</x-tip>
            <x-tip bg="#2e2a56" arrow="96" style="left:1795px; top:86px; width:194px; height:51px">Run Capacity Summary<br>For Selected Date Period</x-tip>
            <x-popup>Run XI Process Summary For Lucy</x-popup>`;

        const rows = this.shadowRoot.getElementById("rows");
        for (const r of ROWS) {
            const row = document.createElement("x-row");
            row.setAttribute("label", r.label);
            if (r.sel) row.setAttribute("sel", "");
            for (let col = 0; col < 6; col++) {
                row.appendChild(makeCell(col, r.cells[col], "", r.sel));
            }
            row.appendChild(makeCell(6, r.total, "total"));
            rows.appendChild(row);
        }

        const noest = (ring, red, teal, tone) => ["", "", "", 0, ring, tone || "bright", red, teal, { noest: 1 }];
        const foot = this.shadowRoot.getElementById("foot");
        foot.appendChild(makeCell(0, noest("79", 25, 40), "foot"));
        foot.appendChild(makeCell(1, noest("40", 15, 68), "foot"));
        foot.appendChild(makeCell(2, noest("18", "", 8, "gray"), "foot"));
        const lit = makeCell(3, ["20h 10m", "24h 50m", "50h 00m", 55, "68", "bright", 23, 12, { pad: 35, gap: 19 }], "foot");
        lit.style.setProperty("--bar-track", "#e9ecf5");
        foot.appendChild(lit);
        foot.appendChild(makeCell(4, noest("32", 15, 68), "foot"));
        foot.appendChild(makeCell(5, ["28h 00m", "3h 00m", "31h 00m", 13, "", "", "", "", { pad: 36 }], "foot"));
        foot.appendChild(makeCell(6, ["28h 00m", "3h 00m", "31h 00m", 13, "789", "bright", 147, 410, { gap: 19 }], "grand"));
    }
}
customElements.define("x-app", XApp);
</script>
</body>
</html>
